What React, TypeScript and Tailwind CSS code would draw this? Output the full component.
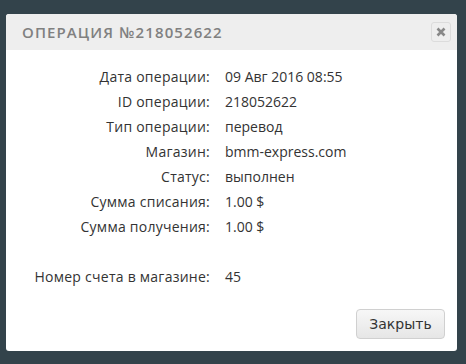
import React from "react";

const rows: [string, string][] = [
  ["Дата операции:", "09 Авг 2016 08:55"],
  ["ID операции:", "218052622"],
  ["Тип операции:", "перевод"],
  ["Магазин:", "bmm-express.com"],
  ["Статус:", "выполнен"],
  ["Сумма списания:", "1.00 $"],
  ["Сумма получения:", "1.00 $"],
];

export default function App() {
  return (
    <div className="w-[466px] h-[364px] bg-[#33434b] pt-[14px] pl-[6px]" style={{ fontFamily: '"Open Sans", sans-serif' }}>
      <div className="w-[451px] h-[337px] bg-white rounded-[3px] flex flex-col overflow-hidden">
        <div className="h-[36px] bg-[#eeeeee] flex items-center justify-between pl-[16px] pr-[6px]">
          <span className="text-[15px] tracking-[1.1px] text-[#808080] font-semibold">ОПЕРАЦИЯ №218052622</span>
          <div className="w-[20px] h-[20px] rounded-[3px] border border-[#dcdcdc] flex items-center justify-center">
            <svg width="10" height="10" viewBox="0 0 10 10">
              <path d="M1.5 1.5 L8.5 8.5 M8.5 1.5 L1.5 8.5" stroke="#888" strokeWidth="2.6" />
            </svg>
          </div>
        </div>
        <div className="flex-1 flex flex-col pt-[14px] text-[#333] text-[14px]">
          {rows.map(([l, v]) => (
            <div key={l} className="flex h-[25px] items-center">
              <div className="w-[204px] text-right tracking-[0.25px]">{l}</div>
              <div className="pl-[15px]">{v}</div>
            </div>
          ))}
          <div className="h-[25px]" />
          <div className="flex h-[25px] items-center">
            <div className="w-[204px] text-right tracking-[0.25px]">Номер счета в магазине:</div>
            <div className="pl-[15px]">45</div>
          </div>
          <div className="flex justify-end pr-[12px] mt-[20px]">
            <button className="w-[89px] h-[30px] rounded-[4px] border border-[#d0d0d0] bg-gradient-to-b from-[#f7f7f7] to-[#e6e6e6] text-[#333] text-[14px]" style={{ fontFamily: '"DejaVu Sans", sans-serif' }}>
              Закрыть
            </button>
          </div>
        </div>
      </div>
    </div>
  );
}
